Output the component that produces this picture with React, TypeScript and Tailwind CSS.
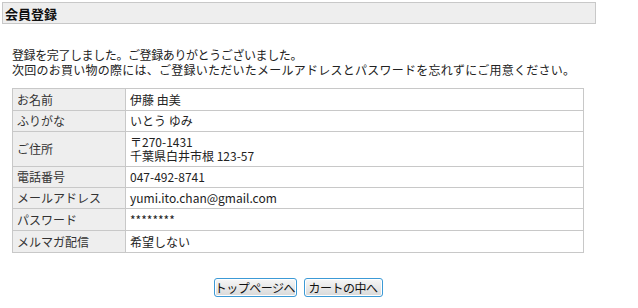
import React from 'react';

const font = { fontFamily: '"Noto Sans CJK JP", "Noto Sans", sans-serif' };

interface Row {
  label: string;
  value: React.ReactNode;
  h: string;
}

const rows: Row[] = [
  { label: 'お名前', value: '伊藤 由美', h: 'h-[22px]' },
  { label: 'ふりがな', value: 'いとう ゆみ', h: 'h-[21px]' },
  {
    label: 'ご住所',
    value: (
      <>
        〒270-1431
        <br />
        千葉県白井市根 123-57
      </>
    ),
    h: 'h-[35px]',
  },
  { label: '電話番号', value: '047-492-8741', h: 'h-[21px]' },
  { label: 'メールアドレス', value: 'yumi.ito.chan@gmail.com', h: 'h-[21px]' },
  { label: 'パスワード', value: '********', h: 'h-[22px]' },
  { label: 'メルマガ配信', value: '希望しない', h: 'h-[21px]' },
];

const Button: React.FC<{ label: string; w: string }> = ({ label, w }) => (
  <button
    className={`${w} h-[19px] px-0 whitespace-nowrap rounded-[3px] border border-[#3c9ad6] bg-gradient-to-b from-[#f7f7f7] to-[#d9d9d9] shadow-[inset_0_0_0_1px_#ffffff] text-[12px] leading-none text-[#111] tracking-[-0.5px]`}
  >
    {label}
  </button>
);

export default function App() {
  return (
    <div className="w-[638px] h-[308px] bg-white text-[#222] pt-[2px] pl-[2px]" style={font}>
      <div className="w-[594px] h-[22px] bg-[#eeeeee] border border-[#c8c8c8] flex items-center pl-[2px]">
        <span className="text-[13px] font-bold text-[#111] leading-none">会員登録</span>
      </div>

      <div className="ml-[10px] w-[572px]">
        <div className="mt-[23px] text-[12px] leading-[15px] whitespace-nowrap">
          <p className="tracking-[-0.4px]">登録を完了しました。ご登録ありがとうございました。</p>
          <p className="tracking-[0.25px]">
            次回のお買い物の際には、ご登録いただいたメールアドレスとパスワードを忘れずにご用意ください。
          </p>
        </div>

        <div className="mt-[11px] border border-[#c8c8c8] grid grid-cols-[113px_1fr]">
          {rows.map((r, i) => (
            <React.Fragment key={r.label}>
              <div
                className={`${r.h} bg-[#eeeeee] border-r border-[#c8c8c8] ${i < rows.length - 1 ? 'border-b' : ''} flex items-center pl-[4px] text-[12px] text-[#333]`}
              >
                {r.label}
              </div>
              <div
                className={`${r.h} border-[#c8c8c8] ${i < rows.length - 1 ? 'border-b' : ''} flex items-center pl-[4px] text-[12px] leading-[14px] text-[#222]`}
              >
                <div>{r.value}</div>
              </div>
            </React.Fragment>
          ))}
        </div>

        <div className="mt-[25px] flex justify-center gap-[7px]">
          <Button label="トップページへ" w="w-[83px]" />
          <Button label="カートの中へ" w="w-[79px]" />
        </div>
      </div>
    </div>
  );
}
